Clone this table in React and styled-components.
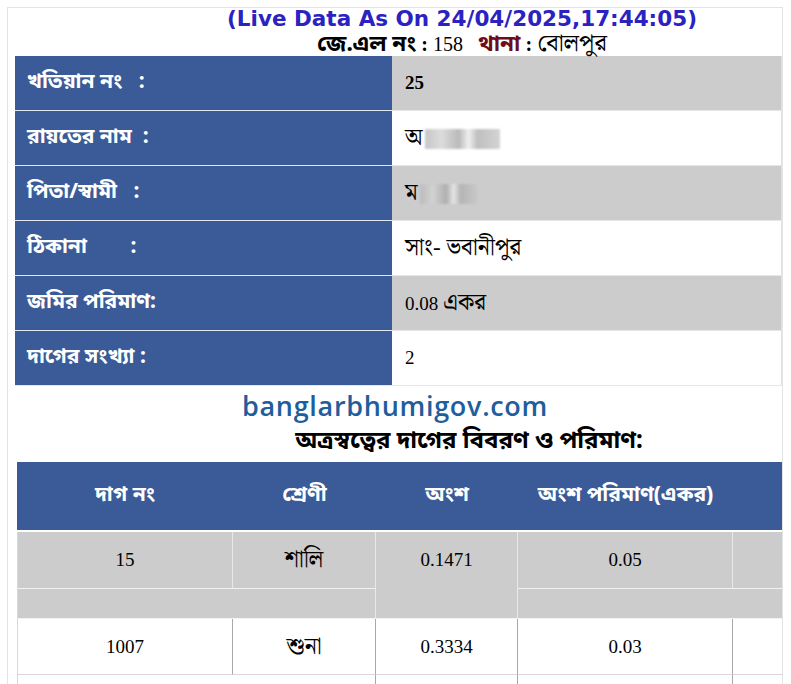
import React from 'react';
import styled, { createGlobalStyle } from 'styled-components';

const GlobalStyle = createGlobalStyle`
  body {
    margin: 0;
    background: #ffffff;
    font-family: "Liberation Serif", "Noto Serif Bengali", "Noto Sans Bengali", serif;
    color: #000;
  }
`;

const BENGALI_BOLD = `"Noto Sans Bengali", "Lohit Bengali", "Noto Sans", sans-serif`;
const BLUE = '#3a5b97';
const GRAY = '#cccccc';

const Frame = styled.div`
  margin: 7px 0 0 7px;
  width: 774px;
  height: 690px;
  border: 1px solid #e4e4e4;
  border-bottom: none;
  overflow: hidden;
`;

const Centered = styled.div`
  width: ${(p) => p.$w}px;
  text-align: center;
  white-space: nowrap;
`;

const LiveStamp = styled.div`
  font-family: "DejaVu Sans", sans-serif;
  font-weight: bold;
  font-size: 21.5px;
  line-height: 22px;
  color: #2b22c2;
`;

const InfoLine = styled.div`
  height: 26px;
  font-size: 20px;
  line-height: 29px;
`;

const Key = styled.span`
  font-family: ${BENGALI_BOLD};
  font-weight: bold;
  font-size: 22.5px;
  line-height: 1;
  color: ${(p) => p.$color || '#000'};
`;

// Bengali runs inside serif text render small, scale them up
const Bn = styled.span`
  font-size: 1.22em;
  line-height: 1;
`;

const InfoTable = styled.table`
  margin: 0 0 0 7px;
  width: 767px;
  border-collapse: collapse;
  table-layout: fixed;
`;

const LabelCell = styled.td`
  width: 377px;
  height: 54px;
  padding: 0 0 0 12px;
  background: ${BLUE};
  color: #fff;
  font-family: ${BENGALI_BOLD};
  font-weight: bold;
  font-size: 21px;
  white-space: pre;
  border-bottom: 1px solid #dfe6f2;
  box-sizing: border-box;
`;

const ValueCell = styled.td`
  height: 54px;
  padding: 0 0 0 13px;
  background: ${(p) => (p.$shade ? GRAY : '#fff')};
  font-size: 19px;
  font-weight: ${(p) => (p.$bold ? 'bold' : 'normal')};
  border-bottom: 1px solid #e6e6e6;
  border-right: 1px solid #e0e0e0;
`;

const Blur = styled.span`
  display: inline-block;
  width: ${(p) => p.$w}px;
  height: 20px;
  margin-left: 2px;
  vertical-align: -4px;
  background: linear-gradient(90deg, #b9b9b9 0%, #d4d4d4 22%, #a9a9a9 45%, #ececec 58%, #b0b0b0 70%, #c9c9c9 100%);
  opacity: 0.8;
  filter: blur(1px);
`;

const Site = styled.div`
  margin-top: 5px;
  text-align: center;
  font-family: "Open Sans", sans-serif;
  font-weight: 600;
  font-size: 27px;
  letter-spacing: 0.7px;
  line-height: 30px;
  color: #1f5e9c;
`;

const SubTitle = styled.div`
  font-family: ${BENGALI_BOLD};
  font-weight: bold;
  font-size: 24px;
  line-height: 30px;
  margin-top: 6px;
`;

const DetailTable = styled.table`
  margin: 5px 0 0 9px;
  border-collapse: separate;
  border-spacing: 0;
  table-layout: fixed;
  width: 960px;
`;

const HeadCell = styled.th`
  width: ${(p) => p.$w}px;
  height: 68px;
  padding: 0;
  background: ${BLUE};
  color: #fff;
  font-family: ${BENGALI_BOLD};
  font-weight: bold;
  font-size: 21px;
  text-align: center;
  border-bottom: 2px solid #fff;
  white-space: nowrap;
`;

const Cell = styled.td`
  height: ${(p) => p.$h || 55}px;
  padding: 0;
  text-align: center;
  vertical-align: ${(p) => (p.$top ? 'top' : 'middle')};
  line-height: ${(p) => (p.$top ? '56px' : 'normal')};
  font-size: 19px;
  background: ${(p) => (p.$shade ? GRAY : '#fff')};
  border-right: 1px solid ${(p) => (p.$shade ? '#e8e8e8' : '#a8a8a8')};
  border-bottom: 1px solid ${(p) => (p.$shade ? '#f2f2f2' : '#d8d8d8')};
  border-left: ${(p) => (p.$first ? '1px solid #d8d8d8' : 'none')};
`;

const infoRows = [
  { label: 'খতিয়ান নং   :', value: '25', bold: true, shade: true },
  { label: 'রায়তের নাম  :', bn: 'অ', blur: 75 },
  { label: 'পিতা/স্বামী   :', bn: 'ম', blur: 58, shade: true },
  { label: 'ঠিকানা        :', bn: 'সাং- ভবানীপুর' },
  { label: 'জমির পরিমাণ:', value: '0.08 ', bn: 'একর', shade: true },
  { label: 'দাগের সংখ্যা :', value: '2' },
];

const columns = [
  { title: 'দাগ নং', w: 216 },
  { title: 'শ্রেণী', w: 143 },
  { title: 'অংশ', w: 142 },
  { title: 'অংশ পরিমাণ(একর)', w: 215 },
  { title: 'মোট পরিমাণ', w: 244 },
];

export default function App() {
  return (
    <>
      <GlobalStyle />
      <Frame>
        <Centered $w={908}>
          <LiveStamp>(Live Data As On 24/04/2025,17:44:05)</LiveStamp>
          <InfoLine>
            <Key>জে.এল নং</Key> <b>:</b> 158&nbsp;&nbsp; <Key $color="#6e0c1c">থানা</Key> <b>:</b> <Bn>বোলপুর</Bn>
          </InfoLine>
        </Centered>

        <InfoTable>
          <tbody>
            {infoRows.map((r) => (
              <tr key={r.label}>
                <LabelCell>{r.label}</LabelCell>
                <ValueCell $shade={r.shade} $bold={r.bold}>
                  {r.value}
                  {r.bn && <Bn>{r.bn}</Bn>}
                  {r.blur && <Blur $w={r.blur} />}
                </ValueCell>
              </tr>
            ))}
          </tbody>
        </InfoTable>

        <Site>banglarbhumigov.com</Site>
        <Centered $w={922}>
          <SubTitle>অত্রস্বত্বের দাগের বিবরণ ও পরিমাণ:</SubTitle>
        </Centered>

        <DetailTable>
          <thead>
            <tr>
              {columns.map((c) => (
                <HeadCell key={c.title} $w={c.w}>{c.title}</HeadCell>
              ))}
            </tr>
          </thead>
          <tbody>
            <tr>
              <Cell $shade $first>15</Cell>
              <Cell $shade><Bn>শালি</Bn></Cell>
              <Cell $shade $top rowSpan={2} $h={86}>0.1471</Cell>
              <Cell $shade>0.05</Cell>
              <Cell $shade></Cell>
            </tr>
            <tr>
              <Cell $shade $first colSpan={2} $h={29}></Cell>
              <Cell $shade colSpan={2} $h={29}></Cell>
            </tr>
            <tr>
              <Cell $first>1007</Cell>
              <Cell><Bn>শুনা</Bn></Cell>
              <Cell>0.3334</Cell>
              <Cell>0.03</Cell>
              <Cell></Cell>
            </tr>
            <tr>
              <Cell $first colSpan={2}></Cell>
              <Cell></Cell>
              <Cell></Cell>
              <Cell></Cell>
            </tr>
          </tbody>
        </DetailTable>
      </Frame>
    </>
  );
}
